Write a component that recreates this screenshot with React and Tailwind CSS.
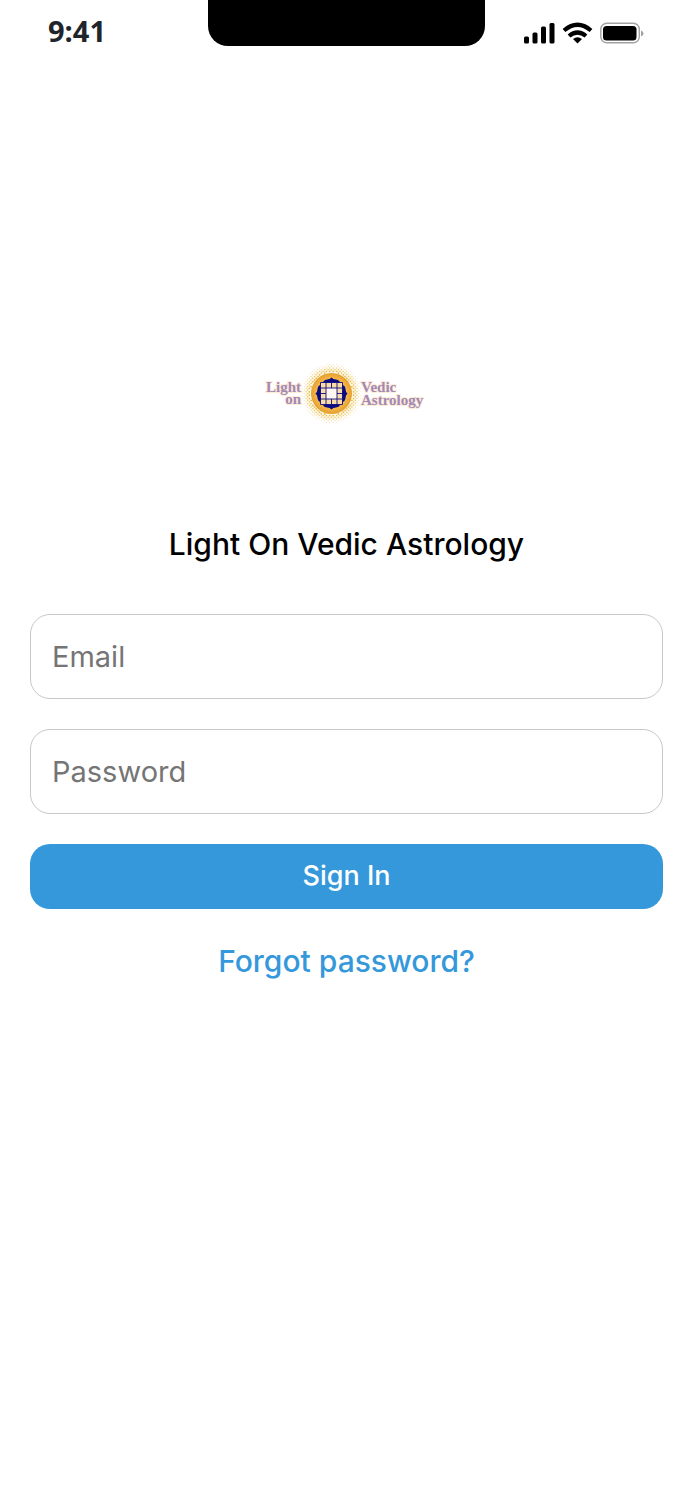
import React, { useState } from "react";

const CENTER_X = 75.5;
const CENTER_Y = 37.5;
const DOT_STEP = 1.7;

// diagonal lattice of dots around the sun, smaller and paler towards the edge
const haloDots = [];
for (let row = -18; row <= 18; row++) {
  for (let col = -18; col <= 18; col++) {
    if ((row + col) % 2 !== 0) continue;
    const distance = Math.hypot(row, col) * DOT_STEP;
    if (distance < 21 || distance > 30) continue;
    const fade = (30 - distance) / 9;
    haloDots.push({
      key: `${row}:${col}`,
      x: CENTER_X + col * DOT_STEP,
      y: CENTER_Y + row * DOT_STEP,
      size: 0.5 + fade * 0.4,
      opacity: 0.3 + fade * 0.7,
    });
  }
}

const Logo = () => (
  <svg
    viewBox="0 0 181 72"
    className="w-[181px] h-[72px]"
    role="img"
    aria-label="Light on Vedic Astrology"
  >
    <defs>
      <radialGradient id="sun">
        <stop offset="0" stopColor="#f9cf7c" />
        <stop offset="0.75" stopColor="#f5b548" />
        <stop offset="1" stopColor="#e5a02c" />
      </radialGradient>
    </defs>
    <circle cx={CENTER_X} cy={CENTER_Y} r="26" fill="#fdf3d3" opacity="0.6" />
    {haloDots.map((dot) => (
      <circle
        key={dot.key}
        cx={dot.x}
        cy={dot.y}
        r={dot.size}
        fill="#e3b440"
        opacity={dot.opacity}
      />
    ))}
    <circle cx={CENTER_X} cy={CENTER_Y} r="20.5" fill="url(#sun)" />

    {/* lotus petals behind the chart */}
    <path
      d="M75.5 21.5 Q77 23.5 80 23.5 Q84 24 84 27 H67 Q67 24 71 23.5 Q74 23.5 75.5 21.5Z
         M75.5 53.5 Q77 51.5 80 51.5 Q84 51 84 48 H67 Q67 51 71 51.5 Q74 51.5 75.5 53.5Z
         M59.5 37.5 Q61.5 36 61.5 33 Q62 29 65 29 V46 Q62 46 61.5 42 Q61.5 39 59.5 37.5Z
         M91.5 37.5 Q89.5 36 89.5 33 Q89 29 86 29 V46 Q89 46 89.5 42 Q89.5 39 91.5 37.5Z"
      fill="#0b0b80"
    />
    <rect x="64.5" y="26.5" width="22" height="22" fill="#f9dca8" />
    <rect x="70" y="32" width="11" height="11" fill="#fff8f2" />
    <path
      d="M64.5 26.5H86.5V48.5H64.5Z M70 26.5V48.5 M81 26.5V48.5 M64.5 32H86.5 M64.5 43H86.5 M75.5 26.5V32 M75.5 43V48.5 M64.5 37.5H70 M81 37.5H86.5"
      fill="none"
      stroke="#0b0b80"
      strokeWidth="0.9"
    />

    <g
      className="font-['Liberation_Serif',serif]"
      fill="#a388b4"
      stroke="#fdecd6"
      strokeWidth="2"
      paintOrder="stroke"
      fontSize="15"
      fontWeight="bold"
    >
      <text x="45" y="36" textAnchor="end">Light</text>
      <text x="45" y="48" textAnchor="end">on</text>
      <text x="105" y="36">Vedic</text>
      <text x="105" y="49">Astrology</text>
    </g>
  </svg>
);

const StatusBar = () => (
  <header className="flex items-start">
    <div className="flex-1 pl-12 pt-[13px]">
      <span className="block text-[29px] leading-9 font-bold text-[#20242b] font-['Open_Sans',sans-serif]">
        9:41
      </span>
    </div>
    <div className="w-2/5 h-[46px] rounded-b-[20px] bg-black" />
    <div className="flex-1 flex justify-end pr-12 pt-[22px]">
      <svg viewBox="0 0 122 24" className="w-[122px] h-6" aria-hidden="true">
        <rect x="1" y="14.5" width="5" height="7" rx="1.5" />
        <rect x="9.5" y="10.5" width="5" height="11" rx="1.5" />
        <rect x="18" y="4.5" width="5" height="17" rx="1.5" />
        <rect x="26.5" y="1" width="5" height="20.5" rx="1.5" />
        <path d="M41 8.5 Q54.5 -3 68 8.5" fill="none" stroke="#000" strokeWidth="4.2" />
        <path d="M46 14 Q54.5 7 63 14" fill="none" stroke="#000" strokeWidth="4.2" />
        <path d="M54.5 21.5 L50 17 Q54.5 13.5 59 17Z" />
        <rect x="77.8" y="1.3" width="38.5" height="19.5" rx="6" fill="none" stroke="#a3a3a3" strokeWidth="1.4" />
        <rect x="80" y="4" width="33.5" height="14.5" rx="3.5" />
        <path d="M118 8.5 Q120.5 9.5 120.5 11.5 T118 14.5Z" fill="#a3a3a3" />
      </svg>
    </div>
  </header>
);

const inputClass =
  "block w-full h-[85px] rounded-[20px] border border-[#c8c8c8] bg-white px-[21px] text-[29px] text-black placeholder:text-[#757575] outline-none focus:border-[#3498db]";

const App = () => {
  const [email, setEmail] = useState("");
  const [password, setPassword] = useState("");

  return (
    <div className="min-h-screen bg-white font-['Inter',sans-serif]">
      <StatusBar />
      {/* the clock's line makes the status bar 49px high */}
      <main className="px-[30px] pt-[307px]">
        <div className="flex justify-center">
          <Logo />
        </div>
        <h1 className="mt-24 text-center text-[30px] leading-10 font-medium text-black">
          Light On Vedic Astrology
        </h1>
        <form className="mt-[50px]" onSubmit={(e) => e.preventDefault()}>
          <input
            type="email"
            aria-label="Email"
            placeholder="Email"
            value={email}
            onChange={(e) => setEmail(e.target.value)}
            className={inputClass}
          />
          <input
            type="password"
            aria-label="Password"
            placeholder="Password"
            value={password}
            onChange={(e) => setPassword(e.target.value)}
            className={`${inputClass} mt-[30px]`}
          />
          <button
            type="submit"
            className="mt-[30px] block h-[65px] w-full rounded-[20px] bg-[#3498db] text-[27px] font-medium text-white"
          >
            Sign In
          </button>
        </form>
        <div className="mt-8 text-center">
          <a href="#forgot" className="text-[30px] leading-10 font-medium text-[#3498db]">
            Forgot password?
          </a>
        </div>
      </main>
    </div>
  );
};

export default App;
